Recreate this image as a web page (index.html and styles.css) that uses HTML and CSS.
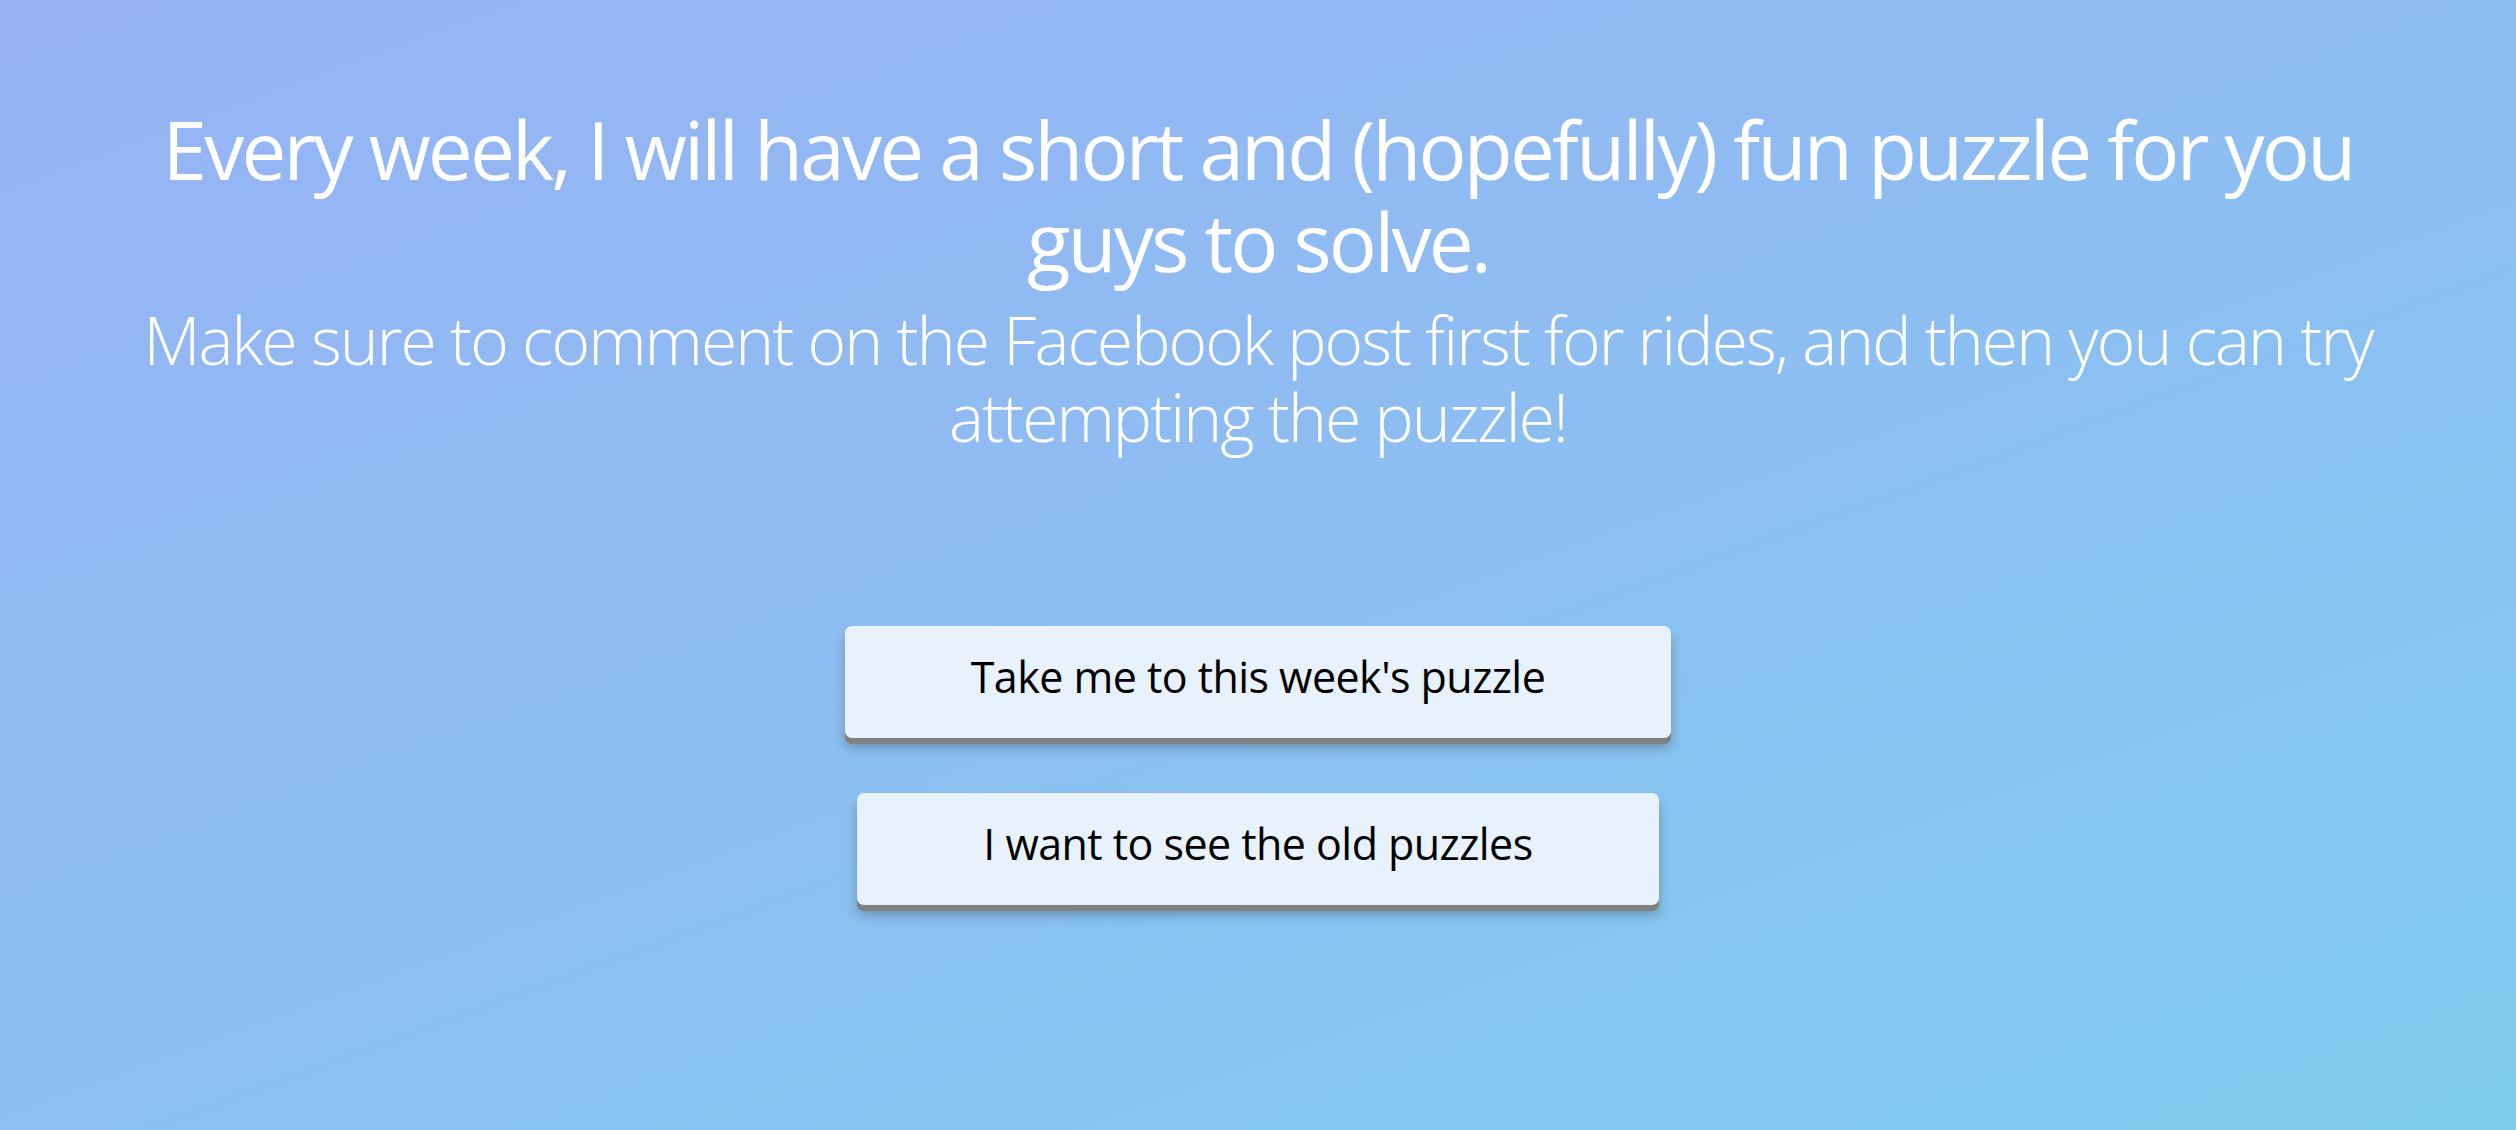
FILE: index.html
```html
<!DOCTYPE html>
<html lang="en">
<head>
<meta charset="utf-8">
<title>Weekly Puzzle</title>
<link rel="stylesheet" href="styles.css">
</head>
<body>
<main class="page">
  <header class="intro">
    <h1 class="intro-title">Every week, I will have a short and (hopefully) fun puzzle for you guys to solve.</h1>
    <p class="intro-text">Make sure to comment on the Facebook post first for rides, and then you can try attempting the puzzle!</p>
  </header>
  <nav class="actions">
    <a class="btn" href="#">Take me to this week's puzzle</a>
    <a class="btn" href="#">I want to see the old puzzles</a>
  </nav>
</main>
</body>
</html>
```
FILE: styles.css
```css
html, body {
  margin: 0;
  padding: 0;
}
body {
  min-height: 100vh;
  background: linear-gradient(160deg, #97b2f4 0%, #8ebdf2 45%, #80cdef 100%);
  font-family: "Open Sans", "Noto Sans", sans-serif;
  color: #fff;
}
.page {
  display: flex;
  flex-direction: column;
  align-items: center;
  padding-top: 103px;
}
.intro {
  width: 2290px;
  text-align: center;
}
.intro-title {
  margin: 0;
  font-size: 80px;
  line-height: 92px;
  font-weight: 400;
  letter-spacing: -2.8px;
}
.intro-text {
  margin: 14px 0 0;
  font-size: 66px;
  line-height: 77px;
  font-weight: 350;
  letter-spacing: -1.95px;
}
.actions {
  margin-top: 171px;
  display: flex;
  flex-direction: column;
  align-items: center;
  gap: 55px;
}
.btn {
  display: inline-block;
  padding: 25px 126px 35px;
  font-size: 43px;
  line-height: 52px;
  font-weight: 400;
  letter-spacing: -0.55px;
  color: #000;
  text-decoration: none;
  background: #e7f2fc;
  border-radius: 7px;
  box-shadow: 0 6px 0 #808080, 0 10px 12px rgba(0, 0, 0, 0.25);
}
```
